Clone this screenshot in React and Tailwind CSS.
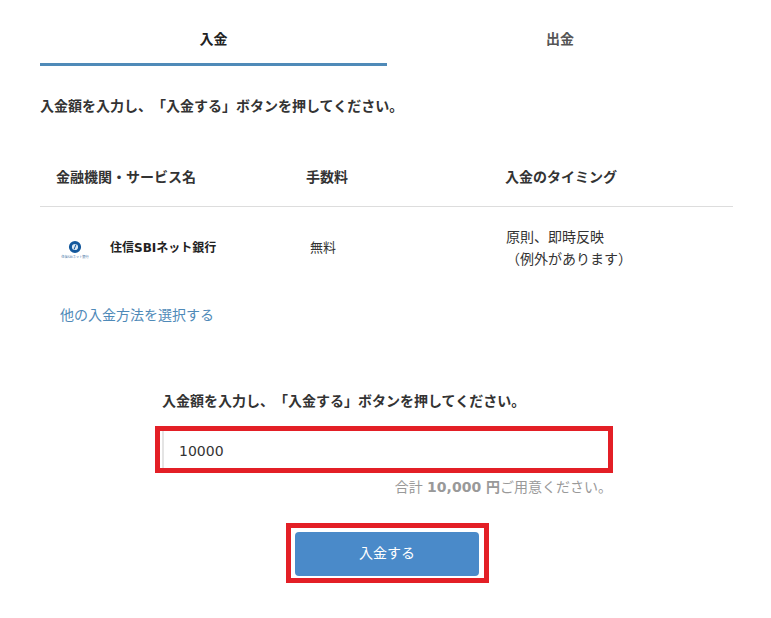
export default function App() {
  return (
    <div className="w-[771px] h-[618px] overflow-hidden bg-white text-[#333] font-['DejaVu_Sans','Noto_Sans_CJK_JP',sans-serif] [text-spacing-trim:space-all]">
      <div className="pt-[16px] pl-[40px] w-[733px]">
        {/* Tabs */}
        <div className="flex">
          <div className="w-[347px] h-[50px] border-b-[3px] border-[#4f8ab8] text-center text-[14px] font-bold leading-[47px] text-[#222]">
            入金
          </div>
          <div className="w-[346px] h-[50px] text-center text-[14px] font-bold leading-[47px] text-[#555]">
            出金
          </div>
        </div>

        <p className="mt-[30px] text-[14px] font-bold leading-[20px] text-[#333]">
          入金額を入力し、「入金する」ボタンを押してください。
        </p>

        {/* Table */}
        <div className="mt-[36px] h-[55px] flex items-start border-b border-[#ddd] text-[14px] font-bold leading-[20px] text-[#333]">
          <div className="w-[266px] pl-[16px] pt-[15px]">金融機関・サービス名</div>
          <div className="w-[199px] pt-[15px]">手数料</div>
          <div className="pt-[15px]">入金のタイミング</div>
        </div>
        <div className="flex items-center h-[81px]">
          <div className="w-[270px] flex items-center pl-[20px]">
            <div className="w-[30px] mt-[4px] flex flex-col items-center">
              <svg width="14" height="14" viewBox="0 0 14 14">
                <circle cx="7" cy="7" r="4.6" fill="#dbe8f3" stroke="#14589c" strokeWidth="3" />
                <path d="M8 4.5 L6 9.5" stroke="#14589c" strokeWidth="1" />
              </svg>
              <span className="mt-[1px] text-[3.2px] leading-[5px] whitespace-nowrap text-[#3f6f9f]">住信SBIネット銀行</span>
            </div>
            <span className="ml-[20px] text-[12px] font-bold text-[#222] whitespace-nowrap">住信SBIネット銀行</span>
          </div>
          <div className="w-[196px] text-[13px] text-[#333]">無料</div>
          <div className="text-[14px] leading-[22px] text-[#333]">
            <div>原則、即時反映</div>
            <div>（例外があります）</div>
          </div>
        </div>

        <a className="block mt-[17px] ml-[20px] text-[14px] leading-[20px] text-[#4f8ab8]">他の入金方法を選択する</a>
      </div>

      {/* Deposit form */}
      <div className="ml-[155px] w-[458px] mt-[66px]">
        <p className="pl-[7px] text-[14px] font-bold leading-[20px] text-[#333]">
          入金額を入力し、「入金する」ボタンを押してください。
        </p>
        <div className="mt-[15px] h-[47px] border-[5px] border-[#e31f26] bg-white flex items-center">
          <div className="h-full flex-1 border-l-2 border-[#e4e4e4] ml-[2px] pl-[15px] text-[14px] leading-[40px] text-[#333]">
            10000
          </div>
        </div>
        <p className="mt-[4px] pr-[1px] text-right text-[14px] leading-[20px] text-[#999]">
          合計 <b>10,000 円</b>ご用意ください。
        </p>
        <div className="mt-[26px] flex justify-center">
          <div className="w-[203px] h-[60px] ml-[7px] border-[5px] border-[#e31f26] pt-[4px] pl-[4px] pr-[5px] pb-[2px]">
            <button className="w-full h-full pb-[2px] rounded-[4px] bg-[#4a8ac9] text-[14px] text-white">入金する</button>
          </div>
        </div>
      </div>
    </div>
  )
}
